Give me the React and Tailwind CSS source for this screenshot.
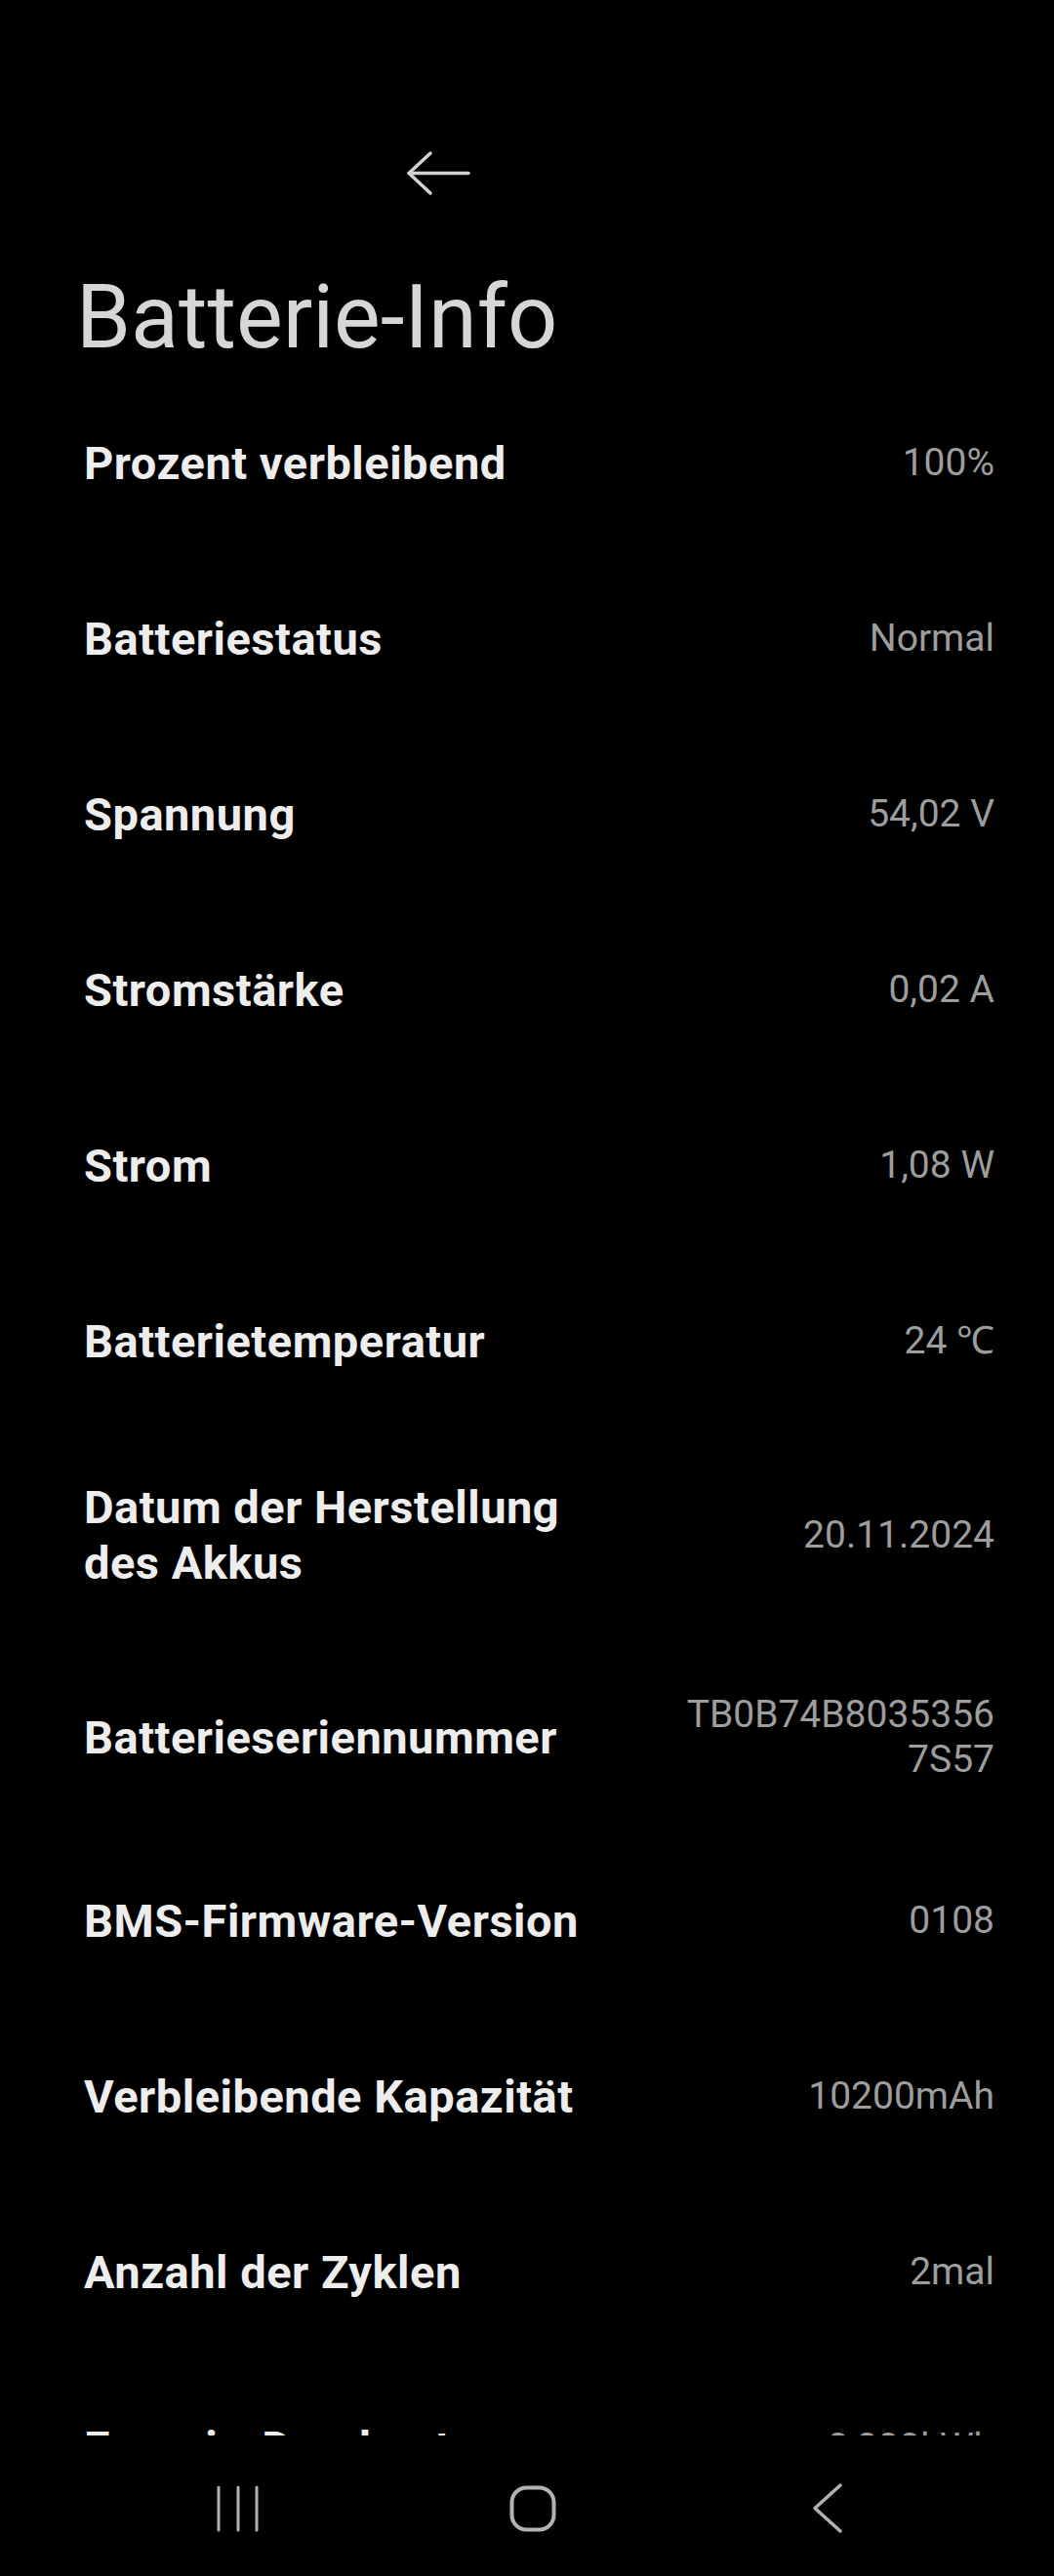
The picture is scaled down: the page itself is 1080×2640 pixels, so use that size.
import React from 'react';

const rows = [
  { label: 'Prozent verbleibend', value: ['100%'] },
  { label: 'Batteriestatus', value: ['Normal'] },
  { label: 'Spannung', value: ['54,02 V'] },
  { label: 'Stromstärke', value: ['0,02 A'] },
  { label: 'Strom', value: ['1,08 W'] },
  { label: 'Batterietemperatur', value: ['24 ℃'] },
  { label: 'Datum der Herstellung des Akkus', value: ['20.11.2024'] },
  { label: 'Batterieseriennummer', value: ['TB0B74B8035356', '7S57'] },
  { label: 'BMS-Firmware-Version', value: ['0108'] },
  { label: 'Verbleibende Kapazität', value: ['10200mAh'] },
  { label: 'Anzahl der Zyklen', value: ['2mal'] },
  { label: 'Energie-Durchsatz', value: ['0,000kWh'] },
];

const InfoRow = ({ label, value }) => (
  <div className="flex items-center justify-between min-h-[180px] py-[52px] pl-[86px] pr-[61px]">
    <div className="max-w-[560px] text-[47px] leading-[57px] tracking-[0.5px] font-bold text-[#ededed]">{label}</div>
    <div className="text-right text-[39px] leading-[46px] text-[#9d9d9d]">
      {value.map((line) => (
        <div key={line}>{line}</div>
      ))}
    </div>
  </div>
);

export default function App() {
  return (
    <div className="w-[1080px] h-[2640px] bg-black flex flex-col overflow-hidden font-['Roboto',sans-serif]">
      <div className="flex-1 min-h-0 overflow-hidden">
        {/* header */}
        <div className="pt-[151px] pl-[414px]">
          <svg width="72" height="52" viewBox="0 0 72 52" fill="none" stroke="#d2d2d2" strokeWidth="3.5" strokeLinecap="round" strokeLinejoin="round">
            <path d="M5 26.5H66" />
            <path d="M27 6L5 26.5L27 47" />
          </svg>
        </div>
        <h1 className="mt-[69px] pl-[78px] text-[90px] leading-[108px] font-normal text-[#d6d6d6]">Batterie-Info</h1>

        <div className="mt-[4px]">
          {rows.map((row) => (
            <InfoRow key={row.label} label={row.label} value={row.value} />
          ))}
        </div>
      </div>

      {/* navigation bar */}
      <div className="h-[144px] shrink-0 flex items-start pt-[45px] pl-[214px] gap-[242px]">
        <svg width="60" height="60" viewBox="0 0 60 60" fill="none" stroke="#b2b2b2" strokeWidth="3" strokeLinecap="round">
          <path d="M10 8V52" />
          <path d="M30 8V52" />
          <path d="M49 8V52" />
        </svg>
        <svg width="60" height="60" viewBox="0 0 60 60" fill="none" stroke="#b2b2b2" strokeWidth="4">
          <rect x="8.5" y="8.5" width="43" height="43" rx="15" />
        </svg>
        <svg width="60" height="60" viewBox="0 0 60 60" fill="none" stroke="#b2b2b2" strokeWidth="3.5" strokeLinecap="round" strokeLinejoin="round">
          <path d="M43 6L17 29.5L43 53" />
        </svg>
      </div>
    </div>
  );
}
